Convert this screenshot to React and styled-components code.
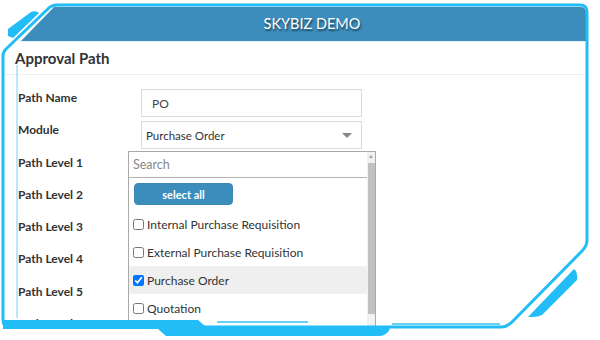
import React from 'react'
import styled, { createGlobalStyle } from 'styled-components';

const GlobalStyle = createGlobalStyle`
body {
    margin: 0;
    background: #fff;
    font-family: Lato, "Liberation Sans", sans-serif;
}
`;

const levels = [1, 2, 3, 4, 5, 6];

const options = [
    { label: 'Internal Purchase Requisition', checked: false },
    { label: 'External Purchase Requisition', checked: false },
    { label: 'Purchase Order', checked: true },
    { label: 'Quotation', checked: false },
];

function Frame() {
    return (
        <FrameSvg width="600" height="340" viewBox="0 0 600 340">
            <path
                d="M 3 320 L 3 56 Q 3 52 6 49 L 50 7 Q 53 5 57 5 L 580 5 Q 587 5 587 12 L 587 240 Q 587 246 582 251 L 512 322 Q 507 327 501 327 L 10 327 Q 3 327 3 320 Z"
                fill="none" stroke="#22bcf6" strokeWidth="3" />
            <path d="M 8 29 L 31 12 Q 36 10 39 13 L 13 38 L 8 36 Z" fill="#22bcf6" />
            <path d="M 528 317 L 574 269 Q 578 272 577 280 L 542 315 Q 538 317 532 317 Z" fill="#22bcf6" />
            <path
                d="M 3 320 L 198 320 L 205 326 L 383 326 Q 388 327 390 329 Q 386 336 380 336 L 166 336 L 158 329 L 3 329 Z"
                fill="#22bcf6" />
            <line x1="17" y1="65" x2="17" y2="318" stroke="#74cff3" strokeWidth="1" />
            <line x1="217" y1="322" x2="308" y2="322" stroke="#36c0f4" strokeWidth="1.5" />
            <line x1="392" y1="324" x2="500" y2="324" stroke="#36c0f4" strokeWidth="1.5" />
        </FrameSvg>
    )
}

function App() {
    return (
        <>
            <GlobalStyle />
            <Screen>
                <Header>SKYBIZ DEMO</Header>
                <Panel>
                    <Title>Approval Path</Title>
                    <Form>
                        <Label>Path Name</Label>
                        <TextInput defaultValue="PO" readOnly />
                        <Label>Module</Label>
                        <Select>
                            <span>Purchase Order</span>
                            <Caret />
                        </Select>
                        {levels.map((n) => (
                            <React.Fragment key={n}>
                                <Label>Path Level {n}</Label>
                                <Select />
                            </React.Fragment>
                        ))}
                    </Form>
                </Panel>

                <Menu>
                    <MenuBody>
                        <Search placeholder="Search" readOnly />
                        <SelectAll>select all</SelectAll>
                        <OptionList>
                            {options.map((o) => (
                                <Option key={o.label} $active={o.checked}>
                                    <Check type="checkbox" defaultChecked={o.checked} />
                                    {o.label}
                                </Option>
                            ))}
                        </OptionList>
                    </MenuBody>
                    <Scrollbar>
                        <ScrollArrow />
                        <Thumb />
                    </Scrollbar>
                </Menu>

                <Frame />
            </Screen>
        </>
    )
}

export default App;

const Screen = styled.div`
position: relative;
width: 600px;
height: 340px;
overflow: hidden;
background: #fff;
`;

const FrameSvg = styled.svg`
position: absolute;
top: 0;
left: 0;
pointer-events: none;
`;

const Header = styled.div`
margin: 7px 0 0 20px;
width: 566px;
height: 35px;
box-sizing: border-box;
padding: 0 0 1px 18px;
background: #3c8dbc;
border-top-right-radius: 5px;
clip-path: polygon(34px 0, 100% 0, 100% 100%, 0 100%);
display: flex;
align-items: center;
justify-content: center;
color: #fff;
font-size: 14.5px;
text-shadow: 1px 2px 2px rgba(0, 0, 0, 0.55);
border-bottom: 1px solid #e2f2fb;
`;

const Panel = styled.div`
margin-left: 5px;
width: 581px;
height: 284px;
overflow: hidden;
`;

const Title = styled.div`
height: 33px;
box-sizing: border-box;
padding: 0 10px;
display: flex;
align-items: center;
border-bottom: 1px solid #eeeeee;
font-size: 15px;
font-weight: 700;
color: #333;
`;

const Form = styled.div`
display: grid;
grid-template-columns: 123px 221px;
grid-auto-rows: 28px;
row-gap: 4.3px;
padding: 14px 0 0 13px;
`;

const Label = styled.div`
font-size: 12px;
font-weight: 700;
line-height: 18px;
color: #333;
`;

const TextInput = styled.input`
box-sizing: border-box;
height: 28px;
border: 1px solid #d8dce3;
padding: 0 10px;
font-family: inherit;
font-size: 12px;
color: #444;
outline: none;
`;

const Select = styled.div`
box-sizing: border-box;
height: 28px;
border: 1px solid #d8dce3;
padding: 0 9px 0 4px;
display: flex;
align-items: center;
justify-content: space-between;
font-size: 11.5px;
color: #333;
`;

const Caret = styled.span`
width: 0;
height: 0;
border-left: 5px solid transparent;
border-right: 5px solid transparent;
border-top: 5px solid #888;
`;

const Menu = styled.div`
position: absolute;
left: 128px;
top: 151px;
width: 248px;
height: 178px;
box-sizing: border-box;
border: 1px solid #aaa;
background: #fff;
display: flex;
`;

const MenuBody = styled.div`
flex: 1;
display: flex;
flex-direction: column;
`;

const Search = styled.input`
box-sizing: border-box;
height: 26px;
border: none;
border-bottom: 1px solid #b5b5b5;
padding: 0 4px;
font-family: inherit;
font-size: 12.5px;
outline: none;
&::placeholder {
    color: #888;
}
`;

const SelectAll = styled.button`
margin: 5px 0 0 5px;
width: 99px;
height: 22px;
border: 1px solid #3a88b6;
border-radius: 4px;
background: #3c8dbc;
color: #fff;
font-family: inherit;
font-size: 11px;
font-weight: 700;
padding: 0;
`;

const OptionList = styled.div`
margin-top: 5px;
display: flex;
flex-direction: column;
`;

const Option = styled.label`
height: 28px;
display: flex;
align-items: center;
gap: 3px;
padding-left: 4px;
font-size: 12px;
color: #333;
background: ${(p) => (p.$active ? '#efefef' : 'transparent')};
`;

const Check = styled.input`
width: 11px;
height: 11px;
margin: 0;
`;

const Scrollbar = styled.div`
width: 8px;
background: #f1f1f1;
display: flex;
flex-direction: column;
align-items: center;
`;

const ScrollArrow = styled.div`
margin-top: 3px;
width: 0;
height: 0;
border-left: 2px solid transparent;
border-right: 2px solid transparent;
border-bottom: 3px solid #a0a0a0;
`;

const Thumb = styled.div`
margin-top: 5px;
width: 7px;
height: 151px;
background: #c1c1c1;
`;
